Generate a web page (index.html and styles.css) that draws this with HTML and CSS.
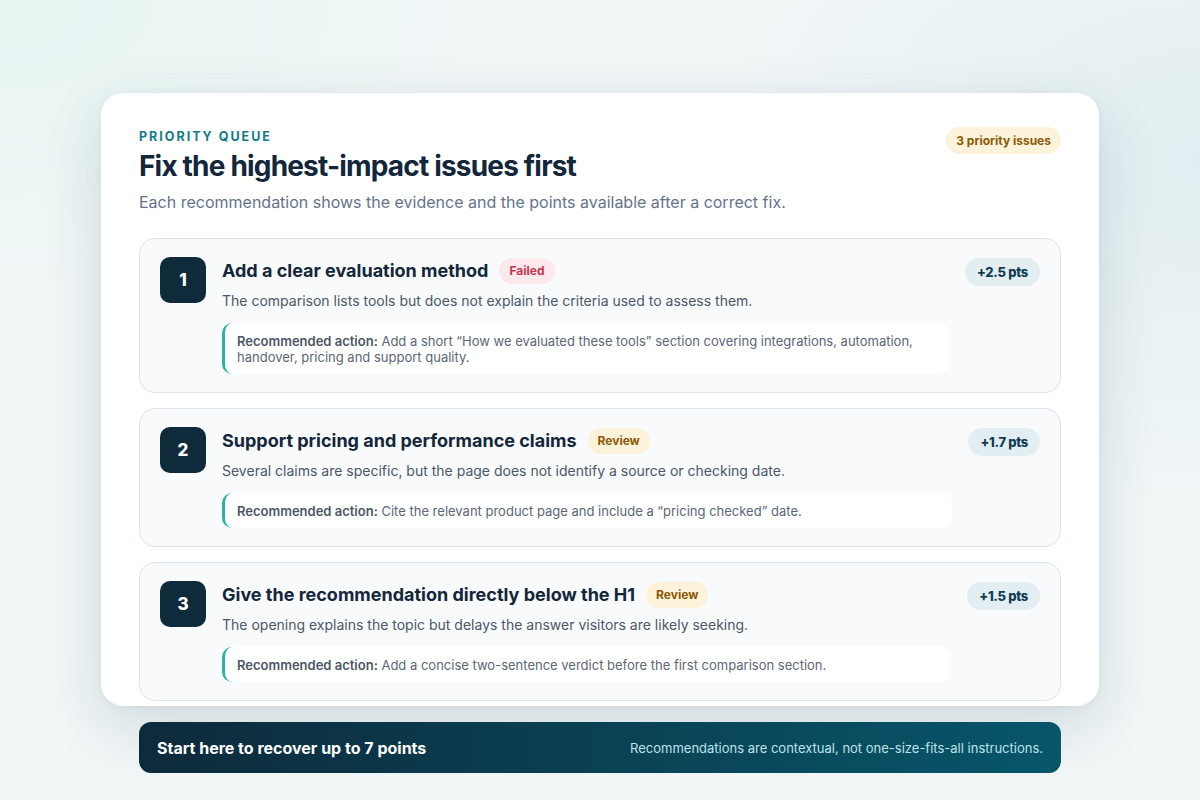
FILE: index.html
```html
<!DOCTYPE html>
<html lang="en">
<head>
<meta charset="utf-8">
<title>Priority queue</title>
<link rel="stylesheet" href="styles.css">
</head>
<body>
<div class="wrap">
  <section class="card">
    <header class="head">
      <div>
        <div class="eyebrow">PRIORITY QUEUE</div>
        <h1 class="title">Fix the highest-impact issues first</h1>
        <p class="sub">Each recommendation shows the evidence and the points available after a correct fix.</p>
      </div>
      <span class="count">3 priority issues</span>
    </header>
    <ol class="list">
      <li class="item">
        <div class="num">1</div>
        <div class="body">
          <div class="row"><h2 class="name">Add a clear evaluation method</h2><span class="tag fail">Failed</span></div>
          <p class="desc">The comparison lists tools but does not explain the criteria used to assess them.</p>
          <p class="action"><b>Recommended action:</b> Add a short “How we evaluated these tools” section covering integrations, automation, handover, pricing and support quality.</p>
        </div>
        <span class="pts">+2.5 pts</span>
      </li>
      <li class="item">
        <div class="num">2</div>
        <div class="body">
          <div class="row"><h2 class="name">Support pricing and performance claims</h2><span class="tag review">Review</span></div>
          <p class="desc">Several claims are specific, but the page does not identify a source or checking date.</p>
          <p class="action"><b>Recommended action:</b> Cite the relevant product page and include a “pricing checked” date.</p>
        </div>
        <span class="pts">+1.7 pts</span>
      </li>
      <li class="item">
        <div class="num">3</div>
        <div class="body">
          <div class="row"><h2 class="name">Give the recommendation directly below the H1</h2><span class="tag review">Review</span></div>
          <p class="desc">The opening explains the topic but delays the answer visitors are likely seeking.</p>
          <p class="action"><b>Recommended action:</b> Add a concise two-sentence verdict before the first comparison section.</p>
        </div>
        <span class="pts">+1.5 pts</span>
      </li>
    </ol>
  </section>
  <footer class="bar">
    <strong>Start here to recover up to 7 points</strong>
    <span>Recommendations are contextual, not one-size-fits-all instructions.</span>
  </footer>
</div>
</body>
</html>
```

FILE: styles.css
```css
* { box-sizing: border-box; }
html, body { margin: 0; height: 100%; }
body {
  font-family: Inter, "Noto Sans", sans-serif;
  color: #13263a;
  background:
    radial-gradient(ellipse 700px 420px at 0% 0%, #e6f4f2 0%, rgba(230,244,242,0) 70%),
    radial-gradient(ellipse 700px 500px at 100% 20%, #e2eef1 0%, rgba(226,238,241,0) 70%),
    #f1f6f7;
  overflow: hidden;
}
.wrap {
  width: 998px;
  margin: 93px auto 0;
}
.card {
  height: 613px;
  background: #fff;
  border-radius: 22px;
  padding: 36px 38px 5px;
  box-shadow: 0 20px 60px rgba(20, 60, 80, 0.14), 0 2px 8px rgba(20, 60, 80, 0.05);
  overflow: hidden;
}
.head {
  display: flex;
  justify-content: space-between;
  align-items: flex-start;
}
.eyebrow {
  font-size: 12.5px;
  font-weight: 700;
  letter-spacing: 2px;
  color: #137c88;
  line-height: 16px;
}
.title {
  margin: 4px 0 0;
  font-size: 28px;
  line-height: 34px;
  font-weight: 700;
  letter-spacing: -0.82px;
  color: #13263a;
}
.sub {
  margin: 8px 0 0;
  font-size: 16px;
  line-height: 22px;
  color: #64748b;
}
.count {
  margin-top: -2px;
  background: #fdf2da;
  color: #8a5a06;
  font-size: 12px;
  font-weight: 700;
  line-height: 27px;
  padding: 0 10px;
  border-radius: 14px;
}
.list {
  list-style: none;
  margin: 25px 0 0;
  padding: 0;
  display: flex;
  flex-direction: column;
  gap: 15px;
}
.item {
  display: grid;
  grid-template-columns: 46px 1fr auto;
  column-gap: 16px;
  align-items: start;
  background: #f8fafc;
  border: 1px solid #dbe4ea;
  border-radius: 16px;
  padding: 18px 20px 18px;
}
.num {
  width: 46px;
  height: 46px;
  border-radius: 10px;
  background: #0f2a3b;
  color: #fff;
  font-weight: 800;
  font-size: 17px;
  display: flex;
  align-items: center;
  justify-content: center;
}
.row {
  display: flex;
  align-items: center;
  gap: 11px;
  height: 26px;
  margin-top: 1px;
}
.name {
  margin: 0;
  font-size: 18px;
  line-height: 26px;
  font-weight: 700;
  letter-spacing: 0;
  color: #13263a;
}
.tag {
  font-size: 12px;
  font-weight: 700;
  line-height: 26px;
  padding: 0 10px;
  border-radius: 13px;
}
.tag.fail { background: #fde8ec; color: #c3364f; }
.tag.review { background: #fdf2da; color: #8a5a06; }
.desc {
  margin: 7px 0 12px;
  font-size: 14px;
  line-height: 20px;
  color: #4a5868;
}
.action {
  margin: 0;
  background: #fff;
  border-left: 3px solid #2bb3a6;
  border-radius: 10px;
  padding: 10px 14px 9px 12px;
  font-size: 13px;
  line-height: 16px;
  color: #5b6776;
}
.action b { color: #4b5766; font-weight: 600; }
.pts {
  margin-top: 1px;
  background: #e3eef2;
  color: #0f3c52;
  font-size: 13px;
  font-weight: 800;
  line-height: 28px;
  padding: 0 12px;
  border-radius: 14px;
  letter-spacing: -0.3px;
}
.bar {
  margin: 16px 38px 0;
  height: 51px;
  border-radius: 12px;
  background: linear-gradient(90deg, #0d2a3b 0%, #0a4356 55%, #07566a 100%);
  display: flex;
  align-items: center;
  justify-content: space-between;
  padding: 0 18px;
}
.bar strong {
  color: #fff;
  font-size: 16px;
  font-weight: 700;
}
.bar span {
  color: #bfe2e8;
  font-size: 13px;
}
```
